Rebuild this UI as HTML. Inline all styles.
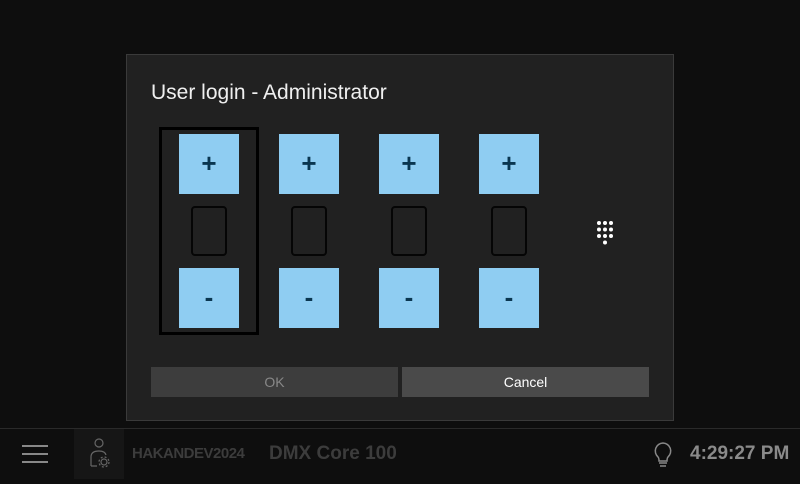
<!DOCTYPE html>
<html><head><style>
*{margin:0;padding:0;box-sizing:border-box}
body{width:800px;height:478px;background:#0e0e0e;font-family:"Liberation Sans",sans-serif;position:relative;overflow:hidden}
.dlg{position:absolute;left:126px;top:54px;width:548px;height:367px;background:#212121;border:1px solid #3a3a3a}
.title{position:absolute;left:151px;top:81px;color:#f0f0f0;font-size:21px}
.sel{position:absolute;left:159px;top:127px;width:100px;height:208px;border:3px solid #000}
.btn{position:absolute;width:60px;height:60px;background:#8fcdf2;color:#0a3650;font-size:26px;font-weight:bold;text-align:center;line-height:58px}
.box{position:absolute;width:36px;height:50px;border:2px solid #050505;border-radius:4px}
.b{position:absolute;top:367px;height:30px;width:247px;text-align:center;line-height:30px;font-size:14px}
.bar{position:absolute;left:0;top:428px;width:800px;height:50px;background:#0e0e0e;border-top:1px solid #2a2a2a}
.t{position:absolute;font-weight:bold;color:#3c3c3c}
</style></head><body>
<div class="dlg"></div>
<div class="title">User login - Administrator</div>
<div class="sel"></div>
<div class="btn" style="left:179px;top:134px">+</div>
<div class="btn" style="left:279px;top:134px">+</div>
<div class="btn" style="left:379px;top:134px">+</div>
<div class="btn" style="left:479px;top:134px">+</div>
<div class="box" style="left:191px;top:206px"></div>
<div class="box" style="left:291px;top:206px"></div>
<div class="box" style="left:391px;top:206px"></div>
<div class="box" style="left:491px;top:206px"></div>
<div class="btn" style="left:179px;top:268px">-</div>
<div class="btn" style="left:279px;top:268px">-</div>
<div class="btn" style="left:379px;top:268px">-</div>
<div class="btn" style="left:479px;top:268px">-</div>
<svg style="position:absolute;left:596px;top:220px" width="22" height="26" fill="#fff">
<circle cx="3" cy="3" r="2"/><circle cx="9" cy="3" r="2"/><circle cx="15" cy="3" r="2"/>
<circle cx="3" cy="9.5" r="2"/><circle cx="9" cy="9.5" r="2"/><circle cx="15" cy="9.5" r="2"/>
<circle cx="3" cy="16" r="2"/><circle cx="9" cy="16" r="2"/><circle cx="15" cy="16" r="2"/>
<circle cx="9" cy="22.5" r="2"/></svg>
<div class="b" style="left:151px;background:#3d3d3d;color:#888">OK</div>
<div class="b" style="left:402px;background:#4a4a4a;color:#fff">Cancel</div>
<div class="bar">
<div style="position:absolute;left:22px;top:16px;width:26px;height:2px;background:#888"></div>
<div style="position:absolute;left:22px;top:24px;width:26px;height:2px;background:#888"></div>
<div style="position:absolute;left:22px;top:32px;width:26px;height:2px;background:#888"></div>
<div style="position:absolute;left:74px;top:0;width:50px;height:50px;background:#161616">
<svg width="50" height="50" fill="none" stroke="#666" stroke-width="1.2"><circle cx="25" cy="14" r="4"/><path d="M17 37V28q0-6 8-6q6 0 7 4M17 37h6"/><circle cx="30" cy="33" r="3"/><circle cx="30" cy="33" r="5" stroke-dasharray="2 2"/></svg></div>
<div class="t" style="left:132px;top:16px;font-size:15px;letter-spacing:-0.5px">HAKANDEV2024</div>
<div class="t" style="left:269px;top:14px;font-size:19px">DMX Core 100</div>
<svg style="position:absolute;left:652px;top:12px" width="22" height="28" fill="none" stroke="#888" stroke-width="1.5"><path d="M11 2a8 8 0 0 0-5 14q1 1 1 4h8q0-3 1-4a8 8 0 0 0-5-14zM7 22h8M8 25h6"/></svg>
<div class="t" style="left:690px;top:14px;font-size:19px;color:#8a8a8a">4:29:27 PM</div>
</div>
</body></html>
